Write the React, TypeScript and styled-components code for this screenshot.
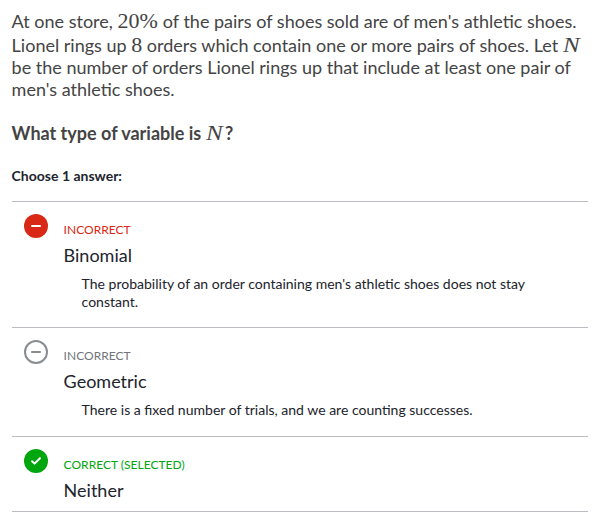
import React from 'react';
import styled, { createGlobalStyle } from 'styled-components';

const Global = createGlobalStyle`
  *{box-sizing:border-box}
  body{margin:0;background:#fff;color:#21242c;font-family:Lato,sans-serif;}
`;
const Page = styled.main`width:605px;height:513px;padding:10px 17px 0 12px;overflow:hidden;`;
const Question = styled.p`margin:0 0 0 -0.4px;height:90px;font-size:18px;line-height:22px;color:#444;white-space:nowrap;`;
const Line = styled.span<{ $h?: number }>`display:block;height:${p => p.$h ?? 22}px;`;
const MathText = styled.span`
  font-family:"Liberation Serif",serif;font-size:22px;line-height:1;font-weight:400;
`;
const Percent = styled(MathText)`margin-right:0.4px;`;
const Variable = styled(MathText)`
  display:inline-block;width:19.4px;line-height:20px;font-size:22px;font-style:italic;
  transform:scaleX(1.14);transform-origin:left;
`;
const Prompt = styled.h2`margin:22px 0 0 -0.4px;height:22px;font-size:18px;line-height:22px;font-weight:700;color:#444;`;
const Choose = styled.div`margin:23px 0 0 -0.4px;height:34px;font-size:14px;line-height:17px;font-weight:700;`;
const List = styled.ul`list-style:none;margin:0;padding:0;border-top:1px solid #babec2;`;
const Item = styled.li<{ $h: number }>`display:flex;gap:15.6px;height:${p => p.$h}px;padding:12px 0 0 12px;border-bottom:1px solid #babec2;`;
const Icon = styled.svg`width:24px;height:24px;flex:none;`;
const Body = styled.div`padding-top:8px;`;
const Status = styled.div<{ $c: string }>`font-size:12px;line-height:15px;letter-spacing:0.02px;color:${p => p.$c};`;
const Title = styled.div`margin-top:7px;font-size:18px;line-height:22px;`;
const Reason = styled.p`margin:9px 0 0 18px;width:460px;font-size:14.02px;line-height:18px;`;

type Kind = 'wrong' | 'neutral' | 'right';
const colors = { wrong: '#d92916', neutral: '#72757b', right: '#00a60e' };
const Mark = ({ kind }: { kind: Kind }) => (
  <Icon viewBox="0 0 24 24" fill="none">
    {kind === 'neutral'
      ? <circle cx="12" cy="12" r="11" stroke="#888d93" strokeWidth="2" />
      : <circle cx="12" cy="12" r="12" fill={colors[kind]} />}
    {kind === 'right'
      ? <path d="M8 12.3l2.6 2.3L16 9.3" stroke="#fff" strokeWidth="2" strokeLinecap="round" strokeLinejoin="round" />
      : <path d="M7.2 12h9.6" stroke={kind === 'wrong' ? '#fff' : '#888d93'} strokeWidth="2" />}
  </Icon>
);
const answers: { kind: Kind; status: string; title: string; reason?: string; h: number }[] = [
  { kind: 'wrong', status: 'INCORRECT', title: 'Binomial', h: 126, reason: "The probability of an order containing men's athletic shoes does not stay constant." },
  { kind: 'neutral', status: 'INCORRECT', title: 'Geometric', h: 109, reason: 'There is a fixed number of trials, and we are counting successes.' },
  { kind: 'right', status: 'CORRECT (SELECTED)', title: 'Neither', h: 75 },
];
export default function App() {
  return <><Global /><Page>
    <Question>
      <Line $h={24}>At one store, <Percent>20%</Percent> of the pairs of shoes sold are of men's athletic shoes.</Line>
      <Line>Lionel rings up <MathText>8</MathText> orders which contain one or more pairs of shoes. Let <Variable>N</Variable></Line>
      <Line>be the number of orders Lionel rings up that include at least one pair of</Line>
      <Line>men's athletic shoes.</Line>
    </Question>
    <Prompt>What type of variable is <Variable>N</Variable>?</Prompt>
    <Choose>Choose 1 answer:</Choose>
    <List>{answers.map(a => <Item key={a.title} $h={a.h}><Mark kind={a.kind} /><Body>
      <Status $c={colors[a.kind]}>{a.status}</Status><Title>{a.title}</Title>{a.reason && <Reason>{a.reason}</Reason>}
    </Body></Item>)}</List>
  </Page></>;
}
